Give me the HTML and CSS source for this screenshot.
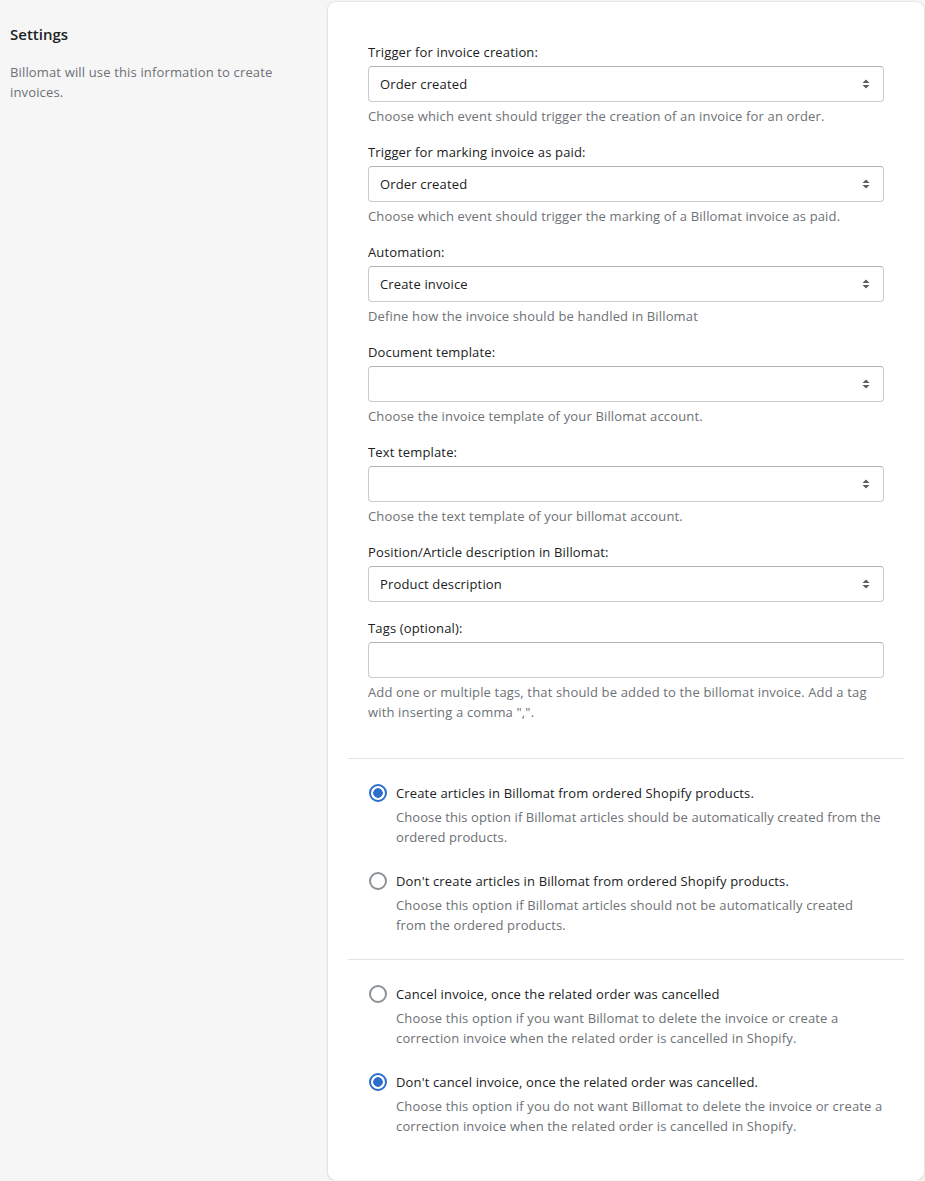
FILE: index.html
```html
<!DOCTYPE html>
<html lang="en">
<head>
<meta charset="utf-8">
<title>Settings</title>
<link rel="stylesheet" href="styles.css">
</head>
<body>
<div class="layout">
  <aside class="aside">
    <h2 class="aside-title">Settings</h2>
    <p class="aside-text">Billomat will use this information to create invoices.</p>
  </aside>
  <main class="card">
    <section class="section fields">
      <div class="field">
        <label class="label">Trigger for invoice creation:</label>
        <div class="select"><span>Order created</span><svg class="arrows" width="10" height="12" viewBox="0 0 10 12"><path d="M5 1.5 8.5 5h-7z"/><path d="M5 10.5 1.5 7h7z"/></svg></div>
        <p class="help">Choose which event should trigger the creation of an invoice for an order.</p>
      </div>
      <div class="field">
        <label class="label">Trigger for marking invoice as paid:</label>
        <div class="select"><span>Order created</span><svg class="arrows" width="10" height="12" viewBox="0 0 10 12"><path d="M5 1.5 8.5 5h-7z"/><path d="M5 10.5 1.5 7h7z"/></svg></div>
        <p class="help">Choose which event should trigger the marking of a Billomat invoice as paid.</p>
      </div>
      <div class="field">
        <label class="label">Automation:</label>
        <div class="select"><span>Create invoice</span><svg class="arrows" width="10" height="12" viewBox="0 0 10 12"><path d="M5 1.5 8.5 5h-7z"/><path d="M5 10.5 1.5 7h7z"/></svg></div>
        <p class="help">Define how the invoice should be handled in Billomat</p>
      </div>
      <div class="field">
        <label class="label">Document template:</label>
        <div class="select"><span></span><svg class="arrows" width="10" height="12" viewBox="0 0 10 12"><path d="M5 1.5 8.5 5h-7z"/><path d="M5 10.5 1.5 7h7z"/></svg></div>
        <p class="help">Choose the invoice template of your Billomat account.</p>
      </div>
      <div class="field">
        <label class="label">Text template:</label>
        <div class="select"><span></span><svg class="arrows" width="10" height="12" viewBox="0 0 10 12"><path d="M5 1.5 8.5 5h-7z"/><path d="M5 10.5 1.5 7h7z"/></svg></div>
        <p class="help">Choose the text template of your billomat account.</p>
      </div>
      <div class="field">
        <label class="label">Position/Article description in Billomat:</label>
        <div class="select"><span>Product description</span><svg class="arrows" width="10" height="12" viewBox="0 0 10 12"><path d="M5 1.5 8.5 5h-7z"/><path d="M5 10.5 1.5 7h7z"/></svg></div>
      </div>
      <div class="field">
        <label class="label">Tags (optional):</label>
        <div class="input"></div>
        <p class="help">Add one or multiple tags, that should be added to the billomat invoice. Add a tag with inserting a comma ",".</p>
      </div>
    </section>
    <section class="section radios">
      <div class="radio-item">
        <span class="radio checked"></span>
        <div class="radio-body">
          <div class="radio-label">Create articles in Billomat from ordered Shopify products.</div>
          <p class="help tight">Choose this option if Billomat articles should be automatically created from the ordered products.</p>
        </div>
      </div>
      <div class="radio-item">
        <span class="radio"></span>
        <div class="radio-body">
          <div class="radio-label">Don't create articles in Billomat from ordered Shopify products.</div>
          <p class="help">Choose this option if Billomat articles should not be automatically created from the ordered products.</p>
        </div>
      </div>
    </section>
    <section class="section radios">
      <div class="radio-item">
        <span class="radio"></span>
        <div class="radio-body">
          <div class="radio-label">Cancel invoice, once the related order was cancelled</div>
          <p class="help">Choose this option if you want Billomat to delete the invoice or create a correction invoice when the related order is cancelled in Shopify.</p>
        </div>
      </div>
      <div class="radio-item">
        <span class="radio checked"></span>
        <div class="radio-body">
          <div class="radio-label">Don't cancel invoice, once the related order was cancelled.</div>
          <p class="help">Choose this option if you do not want Billomat to delete the invoice or create a correction invoice when the related order is cancelled in Shopify.</p>
        </div>
      </div>
    </section>
  </main>
</div>
</body>
</html>
```
FILE: styles.css
```css
* { box-sizing: border-box; }
html, body { margin: 0; padding: 0; }
body {
  background: #f6f6f7;
  font-family: "Open Sans", "Noto Sans", sans-serif;
  font-size: 13px;
  line-height: 20px;
  letter-spacing: 0.15px;
  color: #202223;
}
.layout {
  display: flex;
  align-items: flex-start;
  padding-top: 2px;
}
.aside {
  width: 328px;
  flex: none;
  padding: 22px 40px 0 10px;
}
.aside-title {
  margin: 0;
  font-size: 15px;
  font-weight: 600;
  line-height: 20px;
  letter-spacing: 0;
}
.aside-text {
  margin: 18px 0 0;
  color: #6d7175;
  max-width: 280px;
}
.card {
  width: 596px;
  flex: none;
  background: #fff;
  border-radius: 8px;
  box-shadow: 0 0 0 1px rgba(63,63,68,0.05), 0 1px 3px 0 rgba(63,63,68,0.15);
  padding: 20px;
}
.section { padding: 20px; }
.section + .section { border-top: 1px solid #e1e3e5; }
.fields { padding-bottom: 20px; }
.field { margin-bottom: 16px; }
.label { display: block; margin-bottom: 4px; }
.select, .input {
  height: 36px;
  border: 1px solid #c9cccf;
  border-top-color: #aeb4b9;
  border-radius: 4px;
  background: #fff;
  display: flex;
  align-items: center;
  justify-content: space-between;
  padding: 0 12px 0 11px;
}
.arrows { fill: #5c5f62; }
.help { margin: 4px 0 0; color: #6d7175; }
.help.tight { letter-spacing: 0.08px; }
.radios { padding: 24px 20px; }
.radio-item { display: flex; gap: 9px; }
.radio-item + .radio-item { margin-top: 24px; }
.radio {
  flex: none;
  width: 18px;
  height: 18px;
  margin-top: 1px;
  margin-left: 1px;
  border-radius: 50%;
  border: 2px solid #8c9196;
  background: #fff;
}
.radio.checked {
  border-color: #2c6ecb;
  background: radial-gradient(circle, #2c6ecb 0 4.5px, #fff 5px);
}
.radio-label { line-height: 20px; }
```
